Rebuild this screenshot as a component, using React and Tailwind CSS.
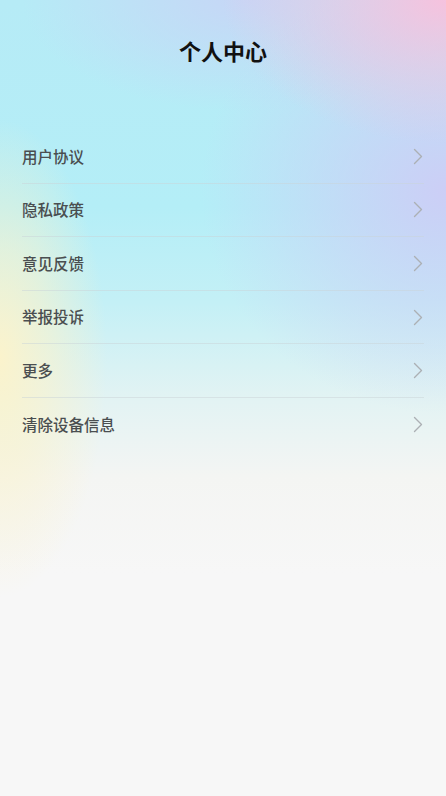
import React from "react";

const items = ["用户协议", "隐私政策", "意见反馈", "举报投诉", "更多", "清除设备信息"];

function Chevron() {
  return (
    <svg width="10" height="17" viewBox="0 0 10 17" fill="none" className="shrink-0">
      <polyline points="1.5,1.5 8.5,8.5 1.5,15.5" stroke="#acb0b4" strokeWidth="1.4" strokeLinecap="round" strokeLinejoin="round" />
    </svg>
  );
}

export default function App() {
  return (
    <div
      className="min-h-[796px] w-full bg-[#f7f7f7] bg-[radial-gradient(ellipse_50%_18%_at_100%_0%,rgba(246,194,222,1)_0%,rgba(246,194,222,0)_100%),radial-gradient(ellipse_55%_28%_at_100%_24%,rgba(204,206,246,1)_0%,rgba(204,206,246,0)_100%),radial-gradient(ellipse_50%_14%_at_55%_0%,rgba(200,212,246,0.9)_0%,rgba(200,212,246,0)_100%),radial-gradient(ellipse_24%_30%_at_0%_45%,rgba(251,243,204,1)_0%,rgba(251,243,204,0.6)_45%,rgba(251,243,204,0)_100%),linear-gradient(to_bottom,#b6ebf6_0%,#b4eef7_26%,#c4f0f6_38%,#e2f3f3_50%,#f4f5f3_60%,#f7f7f7_72%,#f7f7f7_100%)] font-['Noto_Sans_CJK_SC','Noto_Sans',sans-serif]"
    >
      <div className="pt-[36px] text-center">
        <h1 className="text-[22px] leading-[28px] font-bold text-[#111]">个人中心</h1>
      </div>
      <ul className="mx-[22px] mt-[66px]">
        {items.map((t, i) => (
          <li key={t}>
            <div className="flex h-[52.6px] items-center justify-between pr-[1px]">
              <span className="text-[15.5px] font-medium text-[#4a4e50]">{t}</span>
              <Chevron />
            </div>
            {i < items.length - 1 && <div className="h-px bg-[#c9d3d8]/50" />}
          </li>
        ))}
      </ul>
    </div>
  );
}
